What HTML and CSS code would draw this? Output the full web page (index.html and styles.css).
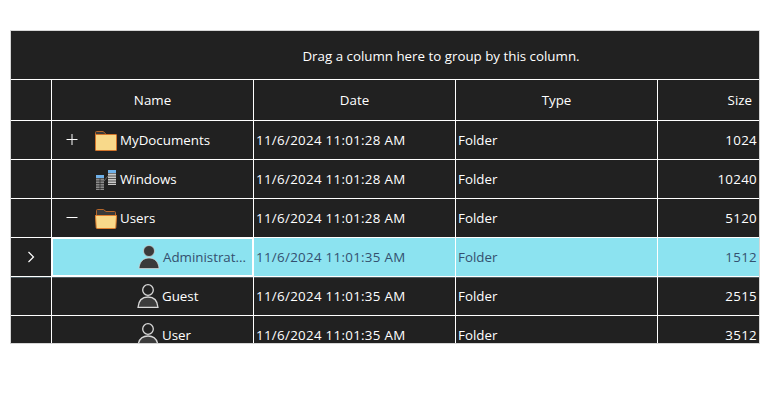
FILE: index.html
```html
<!DOCTYPE html>
<html lang="en">
<head>
<meta charset="utf-8">
<title>Grid</title>
<link rel="stylesheet" href="styles.css">
</head>
<body>
<svg class="defs" width="0" height="0" aria-hidden="true">
  <defs>
    <symbol id="folder-closed" viewBox="0 0 22 20">
      <path d="M.5 4V1.500Q.5.5 1.500.5H8L10.500 2.500V4Z" fill="#3a3a3a" stroke="#b5662a"/>
      <rect x=".5" y="3.500" width="21" height="16" rx=".5" fill="#f8d98a" stroke="#d2752b"/>
    </symbol>
    <symbol id="folder-open" viewBox="0 0 22 20">
      <path d="M1.500 8V1.500Q1.500.5 2.500.5H8.500L11 2.500H19.500Q20.500 2.500 20.500 3.500V8Z" fill="#3a3a3a" stroke="#b5662a"/>
      <path d="M.5 6.500H21.500L20.800 18.500Q20.700 19.500 19.800 19.500H2.200Q1.300 19.500 1.200 18.500Z" fill="#f8d98a" stroke="#e07f2e" stroke-linejoin="round"/>
    </symbol>
    <symbol id="servers" viewBox="-1 0 22 20">
      <rect x="0" y="5" width="8" height="3" fill="#6fb1ea"/>
      <path d="M0 8.500H8V20H0Z" fill="#8a8a8a"/>
      <path d="M0 11H8M0 13.500H8M0 16H8M0 18.500H8M4 8.500V20" stroke="#222" stroke-width=".7"/>
      <path d="M8 11L12 6" stroke="#666" stroke-width="1"/>
      <rect x="12" y="0" width="8" height="3" fill="#6fb1ea"/>
      <path d="M12 3.500H20V15H12Z" fill="#c8c8c8"/>
      <path d="M12 6H20M12 8.500H20M12 11H20M12 13.500H20" stroke="#222" stroke-width=".7"/>
    </symbol>
    <symbol id="user-filled" viewBox="0 0 22 24">
      <circle cx="11" cy="6" r="5.500" fill="#3a3a3a" stroke="#d8d8d8" stroke-width=".7"/>
      <path d="M1 23.500C1.500 16.500 5.500 13 11 13S20.500 16.500 21 23.500Z" fill="#3a3a3a" stroke="#d8d8d8" stroke-width=".7"/>
    </symbol>
    <symbol id="user-outline" viewBox="0 0 22 24">
      <circle cx="11" cy="6" r="5.300" fill="#222" stroke="#d8d8d8" stroke-width="1.300"/>
      <path d="M1 23.500C1.500 16.500 5.500 13 11 13S20.500 16.500 21 23.500Z" fill="#3c3c3c" stroke="#d8d8d8" stroke-width="1.300"/>
    </symbol>
  </defs>
</svg>
<main class="grid">
  <div class="group-panel">Drag a column here to group by this column.</div>
  <div class="row head">
    <div class="cell indicator"></div>
    <div class="cell center">Name</div>
    <div class="cell center">Date</div>
    <div class="cell center">Type</div>
    <div class="cell end size-head">Size</div>
  </div>
  <div class="row">
    <div class="cell indicator"></div>
    <div class="cell name level-1"><svg class="toggle" viewBox="0 0 14 14"><path d="M1.500 6.500H12.500M7 1V12" stroke="#fff" fill="none"/></svg><svg class="icon folder"><use href="#folder-closed"/></svg><span class="label">MyDocuments</span></div>
    <div class="cell num">11/6/2024 11:01:28 AM</div>
    <div class="cell">Folder</div>
    <div class="cell end num">1024</div>
  </div>
  <div class="row">
    <div class="cell indicator"></div>
    <div class="cell name level-1"><span class="toggle"></span><svg class="icon folder"><use href="#servers"/></svg><span class="label">Windows</span></div>
    <div class="cell num">11/6/2024 11:01:28 AM</div>
    <div class="cell">Folder</div>
    <div class="cell end num">10240</div>
  </div>
  <div class="row">
    <div class="cell indicator"></div>
    <div class="cell name level-1"><svg class="toggle" viewBox="0 0 14 14"><path d="M1.500 6.500H12.500" stroke="#fff" fill="none"/></svg><svg class="icon folder"><use href="#folder-open"/></svg><span class="label">Users</span></div>
    <div class="cell num">11/6/2024 11:01:28 AM</div>
    <div class="cell">Folder</div>
    <div class="cell end num">5120</div>
  </div>
  <div class="row selected">
    <div class="cell indicator"><svg class="chevron" viewBox="0 0 8 12"><path d="M1.500 1L6.500 6L1.500 11" fill="none" stroke="#fff" stroke-width="1.200"/></svg></div>
    <div class="cell name level-2 focused"><svg class="icon person"><use href="#user-filled"/></svg><span class="label">Administrat...</span></div>
    <div class="cell num">11/6/2024 11:01:35 AM</div>
    <div class="cell">Folder</div>
    <div class="cell end num">1512</div>
  </div>
  <div class="row after-selected">
    <div class="cell indicator"></div>
    <div class="cell name level-2"><svg class="icon person"><use href="#user-outline"/></svg><span class="label">Guest</span></div>
    <div class="cell num">11/6/2024 11:01:35 AM</div>
    <div class="cell">Folder</div>
    <div class="cell end num">2515</div>
  </div>
  <div class="row">
    <div class="cell indicator"></div>
    <div class="cell name level-2"><svg class="icon person"><use href="#user-outline"/></svg><span class="label">User</span></div>
    <div class="cell num">11/6/2024 11:01:35 AM</div>
    <div class="cell">Folder</div>
    <div class="cell end num">3512</div>
  </div>
</main>
</body>
</html>
```
FILE: styles.css
```css
html, body { margin: 0; padding: 0; background: #fff; }
body { padding: 30px 10px 0; font: 13.33px/17px "Open Sans", "Noto Sans", sans-serif; color: #fff; }
.defs { position: absolute; }
.grid { width: 750px; height: 314px; box-sizing: border-box; border: 1px solid #d6d6d6; background: #212121; overflow: hidden; }
.group-panel { height: 46px; border-bottom: 1px solid #fff; display: flex; align-items: center; justify-content: center; padding-left: 112px; padding-top: 2px; }
.row { display: grid; grid-template-columns: 41px 202px 202px 202px 1fr; height: 39px; }
.head { height: 41px; }
.cell { box-sizing: border-box; display: flex; align-items: center; padding: 0 2px; border-right: 1px solid #fff; border-bottom: 1px solid #fff; white-space: nowrap; overflow: hidden; min-width: 0; }
.cell:last-child { border-right: 0; }
.center { justify-content: center; }
.end { justify-content: flex-end; }
.size-head { padding-right: 7px; }
.num { letter-spacing: .3px; }
.indicator { justify-content: center; padding: 0; }
.chevron { width: 8px; height: 12px; }
.toggle { width: 14px; height: 14px; margin-right: 16px; flex: none; }
.icon { flex: none; }
.folder { width: 22px; height: 20px; margin: 2px 3px 0 0; }
.person { width: 22px; height: 24px; margin-right: 3px; }
.level-1 { padding-left: 13px; }
.level-2 { padding-left: 85px; }
.focused { padding-left: 86px; }
.selected .cell:not(.indicator) { background: #8ce3f0; color: #34506f; }
.selected .focused { box-shadow: inset 0 0 0 1px #fff; }
.after-selected .cell { box-shadow: inset 0 1px 0 #4b5b60; }
```
